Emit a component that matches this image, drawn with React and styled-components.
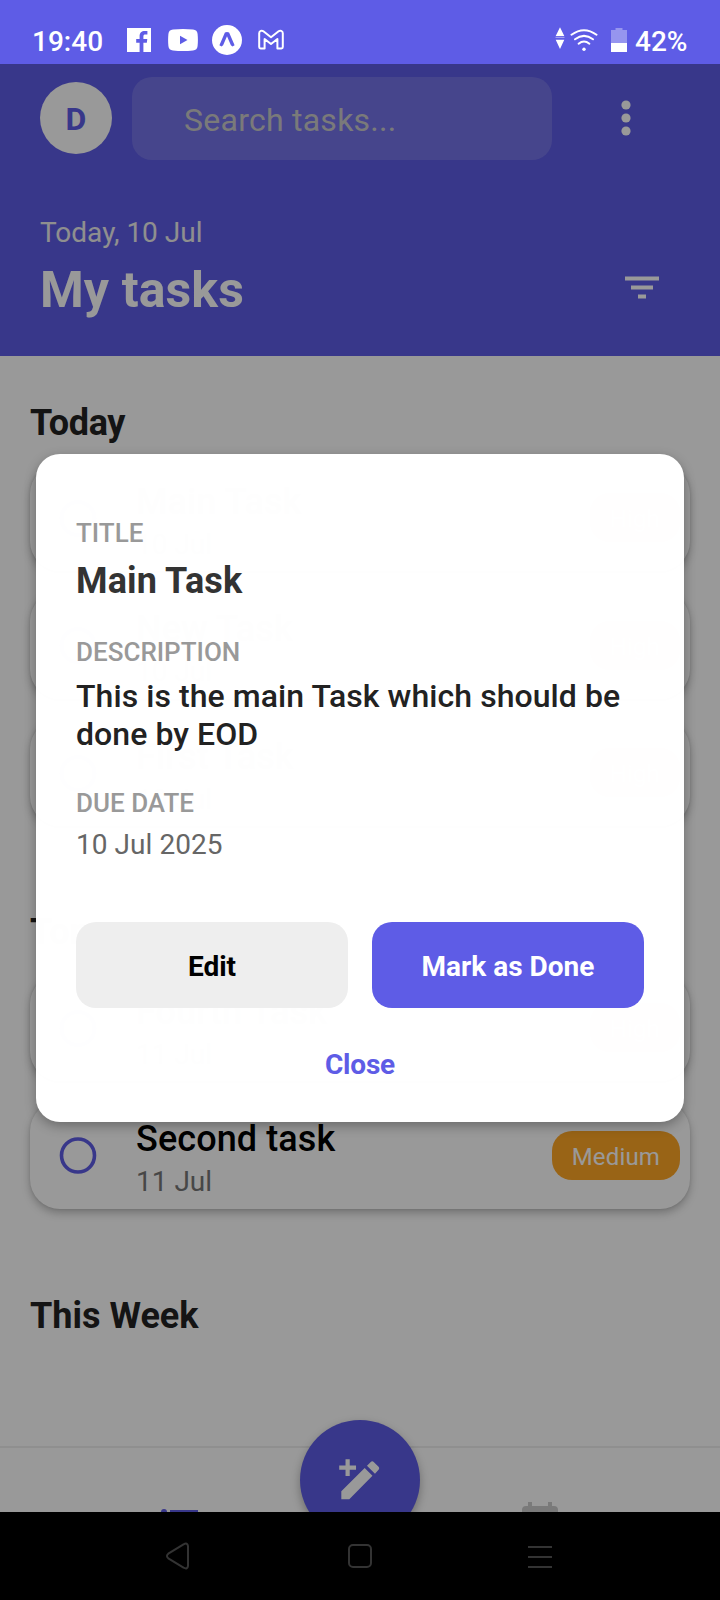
import React from "react";
import styled, { createGlobalStyle } from "styled-components";

const PRIMARY = "#5E5CE6";

const GlobalStyle = createGlobalStyle`
  *, *::before, *::after { box-sizing: border-box; }
  body { margin: 0; background: #000; font-family: Roboto, "Noto Sans", sans-serif; }
  button { border: 0; padding: 0; background: none; font-family: inherit; }
  svg { display: block; flex: none; }
`;

const Phone = styled.div`
  width: 720px;
  height: 1600px;
  display: flex;
  flex-direction: column;
  overflow: hidden;
`;

/* ---------- status bar ---------- */
const StatusBar = styled.div`
  flex: none;
  height: 64px;
  padding: 25px 32px 0;
  display: flex;
  align-items: flex-start;
  background: ${PRIMARY};
  color: #fff;
`;
const StatusText = styled.span`
  width: ${(p) => p.$width}px;
  margin-left: ${(p) => p.$left || 0}px;
  font-size: 28px;
  line-height: 33px;
  font-weight: 500;
  white-space: nowrap;
`;
const StatusIcon = styled.svg`
  height: 30px;
  width: ${(p) => p.$width}px;
  margin-left: ${(p) => p.$left || 0}px;
`;
const Spacer = styled.div`
  flex: 1;
`;

/* ---------- app ---------- */
const AppArea = styled.div`
  position: relative;
  flex: none;
  height: 1448px;
  display: flex;
  flex-direction: column;
  overflow: hidden;
  background: #fff;
`;
const Header = styled.header`
  flex: none;
  height: 292px;
  padding: 13px 52px 0 40px;
  background: ${PRIMARY};
  color: #fff;
`;
const TopRow = styled.div`
  display: flex;
  align-items: center;
  height: 83px;
`;
const Avatar = styled.div`
  width: 72px;
  height: 72px;
  margin-bottom: 1px;
  padding-top: 1px;
  border-radius: 50%;
  background: #fff;
  color: ${PRIMARY};
  display: flex;
  align-items: center;
  justify-content: center;
  font-size: 32px;
  font-weight: 700;
`;
const SearchBox = styled.div`
  width: 420px;
  height: 83px;
  margin-left: 20px;
  padding: 2px 52px 0;
  border-radius: 20px;
  display: flex;
  align-items: center;
  background: rgba(255, 255, 255, 0.15);
  color: #ccc;
  font-size: 32px;
  letter-spacing: 0.25px;
`;
const MenuButton = styled.button`
  margin: 0 0 0 50px;
  width: 48px;
  display: flex;
  justify-content: center;
`;
const TitleRow = styled.div`
  display: flex;
  justify-content: space-between;
  margin-top: 56px;
`;
const HeaderDate = styled.div`
  font-size: 28px;
  line-height: 33px;
  color: #eee;
`;
const PageTitle = styled.h1`
  margin: 12px 0 0;
  font-size: 50px;
  line-height: 58px;
  font-weight: 700;
  letter-spacing: 0.1px;
`;
const FilterButton = styled.button`
  margin-top: 47px;
  width: 50px;
  height: 50px;
`;

const Content = styled.main`
  flex: 1;
  min-height: 0;
  padding: 45.6px 30px 0;
  overflow: hidden;
`;
const Section = styled.section`
  margin-bottom: 85.2px;
  &:last-child { padding-top: 1px; }
`;
const SectionTitle = styled.h2`
  margin: 0 0 20.5px;
  font-size: 36px;
  line-height: 42px;
  font-weight: 700;
  color: #222;
  letter-spacing: ${(p) => p.$spacing || 0}px;
`;
const Card = styled.div`
  height: 107.4px;
  padding: 0 10px 0 24px;
  display: flex;
  align-items: center;
  border-radius: 30px;
  background: #fff;
  box-shadow: 0 4px 8px rgba(0, 0, 0, 0.25), 0 0 3px rgba(0, 0, 0, 0.1);
  & + & { margin-top: 20px; }
`;
const CardBody = styled.div`
  flex: 1;
  margin-left: 34px;
  padding-top: 7px;
`;
const CardTitle = styled.div`
  font-size: 36px;
  line-height: 46px;
  font-weight: 500;
  color: #000;
  letter-spacing: 0.1px;
`;
const CardDate = styled.div`
  margin-top: 1px;
  font-size: 28px;
  line-height: 38px;
  color: #777;
`;
const Badge = styled.div`
  height: 49px;
  padding: 3px 20px 0;
  border-radius: 20px;
  display: flex;
  align-items: center;
  background: ${(p) => (p.$level === "High" ? "#EF5350" : "#FFA726")};
  color: #fff;
  font-size: 24px;
  letter-spacing: 0.15px;
`;

const TabBar = styled.nav`
  flex: none;
  height: 66px;
  border-top: 2px solid #eee;
  display: flex;
  justify-content: space-around;
  padding-top: 52px;
  background: #fff;
  overflow: hidden;
`;
const Fab = styled.button`
  position: absolute;
  left: 300px;
  top: 1356px;
  width: 120px;
  height: 120px;
  border-radius: 50%;
  display: flex;
  align-items: center;
  justify-content: center;
  background: ${PRIMARY};
  box-shadow: 0 4px 10px rgba(0, 0, 0, 0.3);
`;

/* ---------- dialog ---------- */
const Backdrop = styled.div`
  position: absolute;
  inset: 0;
  display: flex;
  align-items: center;
  justify-content: center;
  background: rgba(0, 0, 0, 0.4);
`;
const Dialog = styled.div`
  width: 648px;
  height: 668px;
  padding: 64px 40px 0;
  border-radius: 24px;
  background: rgba(255, 255, 255, 0.995);
  box-shadow: 0 4px 12px rgba(0, 0, 0, 0.3);
`;
const FieldLabel = styled.div`
  margin-top: ${(p) => p.$top || 0}px;
  font-size: 26px;
  line-height: 30px;
  font-weight: 500;
  color: #999;
`;
const TaskTitle = styled.div`
  margin-top: 12px;
  font-size: 36px;
  line-height: 42px;
  font-weight: 700;
  color: #333;
  letter-spacing: 0.12px;
`;
const TaskText = styled.div`
  margin-top: 10px;
  font-size: 32px;
  line-height: 38px;
  font-weight: 500;
  color: #222;
  letter-spacing: 0.07px;
`;
const TaskDate = styled.div`
  margin-top: 10px;
  font-size: 28px;
  line-height: 33px;
  color: #666;
  letter-spacing: 0.05px;
`;
const Actions = styled.div`
  display: flex;
  gap: 24px;
  margin-top: 61px;
`;
const ActionButton = styled.button`
  flex: 1;
  height: 86px;
  padding-top: 2px;
  border-radius: 20px;
  font-size: 28px;
  font-weight: 700;
  background: ${(p) => (p.$primary ? PRIMARY : "#eee")};
  color: ${(p) => (p.$primary ? "#fff" : "#000")};
`;
const CloseButton = styled.button`
  display: block;
  margin: 40px auto 0;
  font-size: 28px;
  line-height: 33px;
  font-weight: 700;
  letter-spacing: -0.2px;
  color: ${PRIMARY};
`;

/* ---------- system navigation ---------- */
const NavBar = styled.div`
  flex: none;
  height: 88px;
  padding: 0 156px;
  display: flex;
  align-items: center;
  justify-content: space-between;
  background: #000;
`;

const SECTIONS = [
  {
    name: "Today",
    spacing: -0.4,
    tasks: [
      ["Main Task", "10 Jul", "High"],
      ["New Task", "10 Jul", "High"],
      ["First Task", "10 Jul", "High"],
    ],
  },
  {
    name: "Tomorrow",
    tasks: [
      ["Fourth Task", "11 Jul", "High"],
      ["Second task", "11 Jul", "Medium"],
    ],
  },
  { name: "This Week", tasks: [] },
];

function TaskCard({ title, date, level }) {
  return (
    <Card>
      <svg width="48" height="48" viewBox="0 0 48 48">
        <circle cx="24" cy="24.500" r="16.500" fill="none" stroke={PRIMARY} strokeWidth="3.600" />
      </svg>
      <CardBody>
        <CardTitle>{title}</CardTitle>
        <CardDate>{date}</CardDate>
      </CardBody>
      <Badge $level={level}>{level}</Badge>
    </Card>
  );
}

function SystemStatus() {
  return (
    <StatusBar>
      <StatusText $width={95}>19:40</StatusText>
      <StatusIcon $width={24} viewBox="0 0 24 30">
        <path d="M0 3h24v24h-7.600v-9.200h3.400l.5-3.900h-3.900v-2.400c0-1.400.6-2 2-2h2V6.100c-.6-.1-1.600-.2-2.600-.2-3.200 0-5.200 1.900-5.200 5.100v2.900H9.200v3.900h3.400V27H0z" fill="#fff" />
      </StatusIcon>
      <StatusIcon $width={30} $left={17} viewBox="0 0 30 30">
        <path fillRule="evenodd" d="M5 4.500Q15 3.500 25 4.500Q29.300 4.800 29.600 9Q30.200 15 29.600 21Q29.300 25.200 25 25.500Q15 26.500 5 25.500Q.7 25.200.4 21Q-.2 15 .4 9Q.7 4.800 5 4.500ZM12 10.700v8.600l7.500-4.300z" fill="#fff" />
      </StatusIcon>
      <StatusIcon $width={30} $left={14} viewBox="0 0 30 30">
        <circle cx="15" cy="15" r="15" fill="#fff" />
        <path d="M12.900 7.600Q15 6.600 17.100 7.600L22.600 20.200 20.500 21.600 18.900 20.200 15 11.200 11.100 20.200 9.500 21.600 7.400 20.200Z" fill={PRIMARY} />
      </StatusIcon>
      <StatusIcon $width={26} $left={16} viewBox="0 0 26 30">
        <path d="M1.200 8.200C1.200 5.600 3.900 5.100 5.400 6.300L13 12.300 20.600 6.300C22.100 5.100 24.800 5.600 24.800 8.200V22Q24.800 23.400 23.400 23.400H19.400V14L13 19 6.600 14V23.400H2.600Q1.200 23.400 1.200 22Z" fill="none" stroke="#fff" strokeWidth="2" strokeLinejoin="round" />
      </StatusIcon>
      <Spacer />
      <StatusIcon $width={10} viewBox="0 0 10 30">
        <path d="M5 2.300 9.300 11H.7ZM5 24 9.300 14.800H.7Z" fill="#fff" />
        <path d="M.5 12.300h9" stroke="#fff" strokeOpacity=".5" strokeWidth="1" />
      </StatusIcon>
      <StatusIcon $width={28} $left={4.5} viewBox="0 0 28 30">
        <g fill="none" stroke="#fff" strokeWidth="2" strokeLinecap="round">
          <path d="M1.500 9.700Q14 .6 26.500 9.700" />
          <path d="M5 14.300Q14 7.400 23 14.300" />
          <path d="M8.600 18.700Q14 14.400 19.400 18.700" />
        </g>
        <circle cx="14" cy="24.300" r="1.700" fill="#fff" />
      </StatusIcon>
      <StatusIcon $width={16} $left={13.5} viewBox="0 0 16 30">
        <path d="M0 5h4.500V3h7v2H16v13H0z" fill="#fff" fillOpacity=".35" />
        <path d="M0 18h16v9H0z" fill="#fff" />
      </StatusIcon>
      <StatusText $width={53} $left={8}>42%</StatusText>
    </StatusBar>
  );
}

function AppHeader() {
  return (
    <Header>
      <TopRow>
        <Avatar>D</Avatar>
        <SearchBox>Search tasks...</SearchBox>
        <MenuButton aria-label="Menu">
          <svg width="12" height="38" viewBox="0 0 12 38" fill="#fff">
            <circle cx="6" cy="5" r="4.600" />
            <circle cx="6" cy="18" r="4.600" />
            <circle cx="6" cy="31" r="4.600" />
          </svg>
        </MenuButton>
      </TopRow>
      <TitleRow>
        <div>
          <HeaderDate>Today, 10 Jul</HeaderDate>
          <PageTitle>My tasks</PageTitle>
        </div>
        <FilterButton aria-label="Filter">
          <svg width="50" height="50" viewBox="0 0 50 50" fill="#fff">
            <path d="M7 13.400h34v4H7zM13 22.500h22v4H13zM20 31.600h8v4h-8z" />
          </svg>
        </FilterButton>
      </TitleRow>
    </Header>
  );
}

export default function App() {
  return (
    <Phone>
      <GlobalStyle />
      <SystemStatus />
      <AppArea>
        <AppHeader />
        <Content>
          {SECTIONS.map((s) => (
            <Section key={s.name}>
              <SectionTitle $spacing={s.spacing}>{s.name}</SectionTitle>
              {s.tasks.map(([title, date, level]) => (
                <TaskCard key={title} title={title} date={date} level={level} />
              ))}
            </Section>
          ))}
        </Content>
        <TabBar>
          <svg width="48" height="48" viewBox="0 0 24 24" fill={PRIMARY}>
            <path d="M7 5h14v2H7zM7 11h14v2H7zM7 17h14v2H7z" />
            <circle cx="4" cy="6" r="1.500" />
            <circle cx="4" cy="12" r="1.500" />
            <circle cx="4" cy="18" r="1.500" />
          </svg>
          <svg width="48" height="48" viewBox="0 0 24 24" fill="#ccc">
            <path d="M19 19H5V8h14M16 1v2H8V1H6v2H5a2 2 0 0 0-2 2v14a2 2 0 0 0 2 2h14a2 2 0 0 0 2-2V5a2 2 0 0 0-2-2h-1V1" />
          </svg>
        </TabBar>
        <Fab aria-label="Add task">
          <svg width="50.500" height="50.500" viewBox="0 0 24 24" fill="#fff">
            <path d="M20.700 7c.4-.4.4-1 0-1.400l-2.300-2.300c-.4-.4-1-.4-1.400 0l-1.800 1.800L19 8.900M3 17.200V21h3.800l11-11.100-3.700-3.700M7 2v3h3v2H7v3H5V7H2V5h3V2z" />
          </svg>
        </Fab>
        <Backdrop>
          <Dialog role="dialog">
            <FieldLabel>TITLE</FieldLabel>
            <TaskTitle>Main Task</TaskTitle>
            <FieldLabel $top={35}>DESCRIPTION</FieldLabel>
            <TaskText>This is the main Task which should be done by EOD</TaskText>
            <FieldLabel $top={35}>DUE DATE</FieldLabel>
            <TaskDate>10 Jul 2025</TaskDate>
            <Actions>
              <ActionButton>Edit</ActionButton>
              <ActionButton $primary>Mark as Done</ActionButton>
            </Actions>
            <CloseButton>Close</CloseButton>
          </Dialog>
        </Backdrop>
      </AppArea>
      <NavBar>
        <svg width="48" height="48" viewBox="0 0 48 48" fill="none" stroke="#333" strokeWidth="2" strokeLinejoin="round">
          <path d="M12.300 21.700 27.500 12.300Q31.600 10.200 32 14.200V33.800Q31.600 37.800 27.500 35.700L12.300 26.300Q9.600 24 12.300 21.700Z" />
        </svg>
        <svg width="48" height="48" viewBox="0 0 48 48" fill="none" stroke="#333" strokeWidth="2">
          <rect x="13" y="13" width="22" height="22" rx="4" />
        </svg>
        <svg width="48" height="48" viewBox="0 0 48 48" fill="none" stroke="#333" strokeWidth="2">
          <path d="M12 15h24M12 25h24M12 35h24" />
        </svg>
      </NavBar>
    </Phone>
  );
}
